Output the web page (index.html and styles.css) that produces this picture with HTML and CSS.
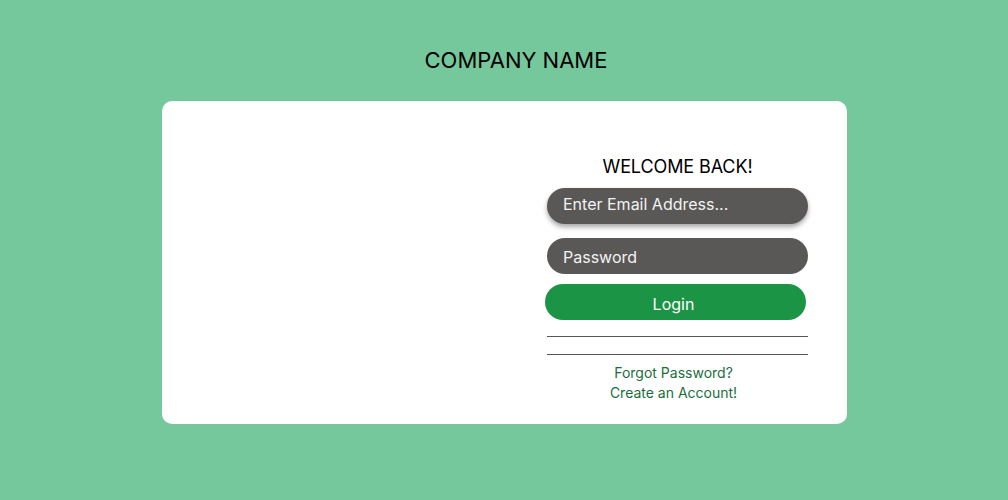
FILE: index.html
```html
<!DOCTYPE html>
<html>
<head>
<meta charset="utf-8">
<link rel="stylesheet" href="styles.css">
</head>
<body>
<header class="brand">COMPANY NAME</header>
<main class="card">
  <section class="art"></section>
  <section class="auth">
    <h2 class="welcome">WELCOME BACK!</h2>
    <div class="field field-email">Enter Email Address...</div>
    <div class="field field-pass">Password</div>
    <button class="login">Login</button>
    <hr class="rule rule-1">
    <hr class="rule rule-2">
    <nav class="links">
      <a href="#">Forgot Password?</a>
      <a href="#">Create an Account!</a>
    </nav>
  </section>
</main>
</body>
</html>
```
FILE: styles.css
```css
* { box-sizing: border-box; }
html, body { margin: 0; padding: 0; }
body {
  background: #74c89c;
  font-family: Inter, "Noto Sans", sans-serif;
  width: 1008px;
  height: 500px;
  overflow: hidden;
  padding-top: 47px;
}
.brand {
  font-size: 22px;
  line-height: 26px;
  text-align: center;
  color: #000;
  padding-left: 24px;
  height: 24px;
  margin-bottom: 30px;
}
.card {
  width: 685px;
  height: 323px;
  margin-left: 162px;
  background: #fff;
  border-radius: 10px;
  display: flex;
}
.art { flex: 0 0 342px; }
.auth {
  flex: 1;
  padding: 55px 0 0 43px;
  display: flex;
  flex-direction: column;
  width: 343px;
}
.welcome {
  margin: 0 0 10px;
  width: 261px;
  font-size: 18px;
  line-height: 22px;
  font-weight: 400;
  text-align: center;
  color: #000;
  letter-spacing: -0.1px;
}
.field {
  width: 261px;
  height: 36px;
  border-radius: 18px;
  background: #5a5856;
  color: #f2f2f2;
  font-size: 16px;
  padding-left: 16px;
}
.field-email {
  line-height: 32px;
  margin-bottom: 14px;
  box-shadow: 0 3px 5px rgba(0,0,0,0.35);
}
.field-pass {
  line-height: 38px;
  margin-bottom: 10px;
}
.login {
  width: 261px;
  height: 36px;
  margin-left: -2px;
  border: none;
  border-radius: 18px;
  background: #1c9446;
  color: #fff;
  font-family: inherit;
  font-size: 16px;
  padding: 3px 4px 0 0;
}
.rule {
  width: 261px;
  margin: 0;
  border: none;
  border-top: 1px solid #555;
  height: 0;
}
.rule-1 { margin-top: 16px; }
.rule-2 { margin-top: 17px; }
.links {
  width: 261px;
  margin-top: 8px;
  display: flex;
  flex-direction: column;
  align-items: center;
  padding-right: 8px;
}
.links a {
  color: #1b6e3c;
  text-decoration: none;
  font-size: 14px;
  line-height: 20px;
}
```
